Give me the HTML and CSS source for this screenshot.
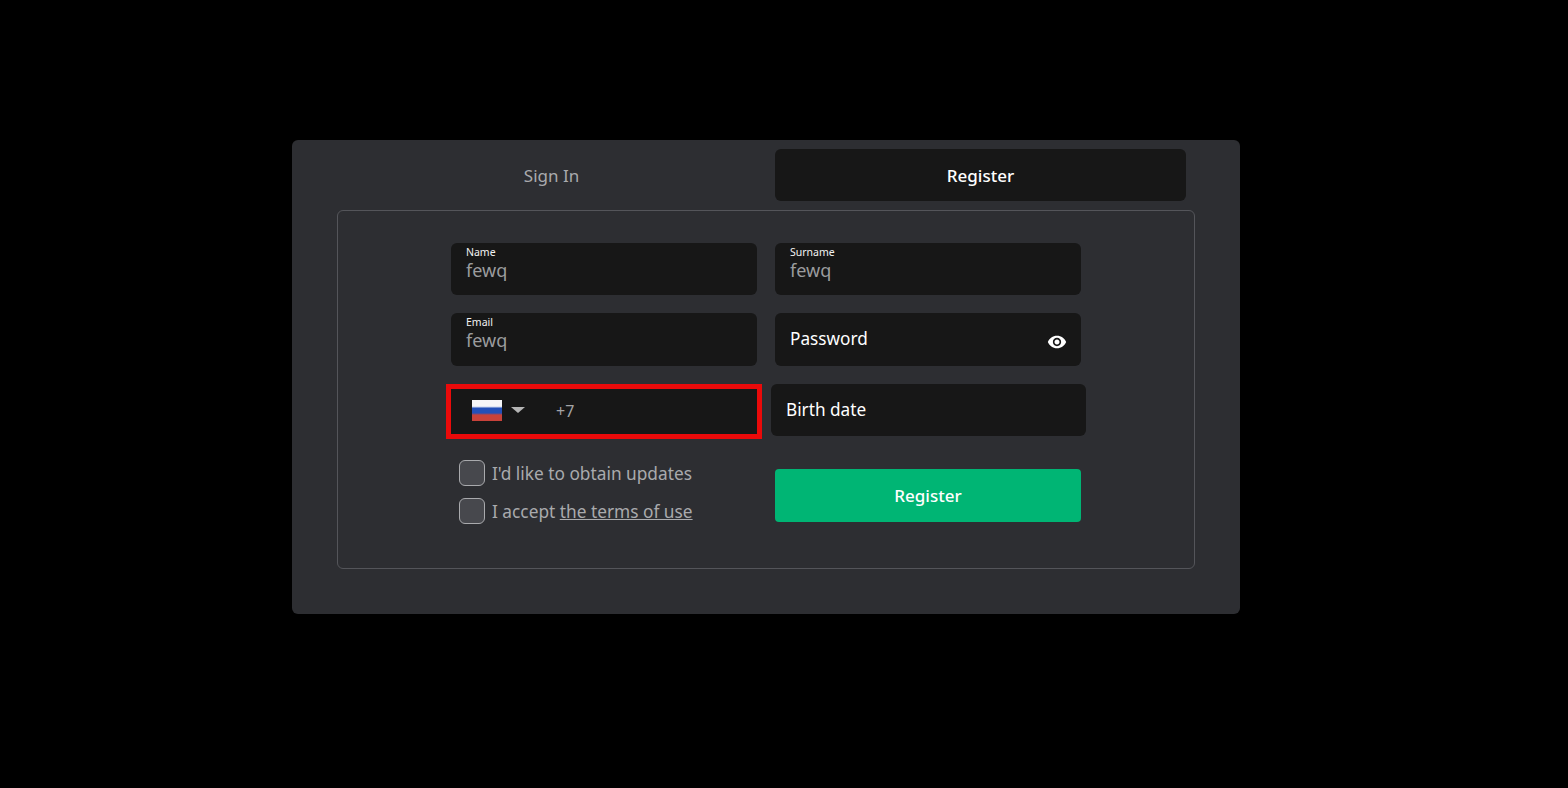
FILE: index.html
```html
<!DOCTYPE html>
<html lang="en">
<head>
    <meta charset="UTF-8">
    <title>Register</title>
    <link rel="stylesheet" href="styles.css">
</head>
<body>
    <div class="panel">
        <div class="tabs">
            <div class="tab">Sign In</div>
            <div class="tab tab-active">Register</div>
        </div>
        <div class="box">
            <form class="reg-form">
                <div class="row">
                    <div class="field">
                        <span class="float-label">Name</span>
                        <span class="value">fewq</span>
                    </div>
                    <div class="field">
                        <span class="float-label">Surname</span>
                        <span class="value">fewq</span>
                    </div>
                </div>
                <div class="row">
                    <div class="field field-tall">
                        <span class="float-label">Email</span>
                        <span class="value">fewq</span>
                    </div>
                    <div class="field field-tall field-plain">
                        <span class="placeholder">Password</span>
                        <svg class="eye" viewBox="0 0 24 24" width="20" height="20">
                            <path fill="#fff" d="M12 4.5C7 4.5 2.73 7.61 1 12c1.73 4.39 6 7.5 11 7.5s9.27-3.11 11-7.5c-1.73-4.39-6-7.5-11-7.5zM12 17c-2.76 0-5-2.24-5-5s2.24-5 5-5 5 2.24 5 5-2.24 5-5 5zm0-8c-1.66 0-3 1.34-3 3s1.34 3 3 3 3-1.34 3-3-1.34-3-3-3z"/>
                        </svg>
                    </div>
                </div>
                <div class="row row-wide">
                    <div class="phone">
                        <span class="flag"></span>
                        <span class="caret"></span>
                        <span class="dial">+7</span>
                    </div>
                    <div class="field field-plain field-birth">
                        <span class="placeholder">Birth date</span>
                    </div>
                </div>
                <div class="row">
                    <div class="checks">
                        <label class="check"><span class="checkbox"></span>I'd like to obtain updates</label>
                        <label class="check"><span class="checkbox"></span><span>I accept <a href="#">the terms of use</a></span></label>
                    </div>
                    <button type="button" class="submit">Register</button>
                </div>
            </form>
        </div>
    </div>
</body>
</html>
```

FILE: styles.css
```css
* {
    box-sizing: border-box;
    margin: 0;
    padding: 0;
}

body {
    background-color: #000;
    font-family: "Noto Sans", "Open Sans", sans-serif;
    height: 788px;
    padding-top: 140px;
    overflow: hidden;
}

.panel {
    width: 948px;
    height: 474px;
    margin-left: 292px;
    padding-top: 9px;
    background-color: #2d2e32;
    border-radius: 6px;
    display: flex;
    flex-direction: column;
    align-items: center;
}

.tabs {
    display: flex;
    gap: 18px;
    width: 840px;
    margin-bottom: 9px;
}

.tab {
    flex: 1;
    height: 52px;
    display: flex;
    align-items: center;
    justify-content: center;
    border-radius: 6px;
    font-size: 17px;
    color: #a9aaad;
}

.tab-active {
    background-color: #171717;
    color: #fff;
    font-weight: 500;
}

.box {
    width: 858px;
    height: 359px;
    border: 1px solid #54555a;
    border-radius: 6px;
    padding-top: 32px;
    display: flex;
    justify-content: center;
}

.reg-form {
    width: 630px;
    display: flex;
    flex-direction: column;
}

.row {
    display: flex;
    gap: 18px;
    margin-bottom: 18px;
}

.field {
    position: relative;
    width: 306px;
    height: 52px;
    padding: 3px 15px 0;
    background-color: #171717;
    border-radius: 6px;
    display: flex;
    flex-direction: column;
}

.field-tall {
    height: 53px;
}

.field-plain {
    flex-direction: row;
    align-items: center;
    padding-top: 0;
    padding-bottom: 2px;
}

.float-label {
    font-size: 10.5px;
    line-height: 13px;
    color: #f2f2f2;
}

.value {
    font-size: 18px;
    line-height: 22px;
    color: #9b9c9e;
}

.placeholder {
    font-size: 17.2px;
    color: #fff;
}

.eye {
    position: absolute;
    right: 14px;
    top: 19px;
}

.row-wide {
    gap: 9px;
    margin: 0 -5px 18px;
    align-items: flex-start;
}

.phone {
    width: 316px;
    height: 55px;
    border: 5px solid #ea0a0a;
    background-color: #171717;
    display: flex;
    align-items: flex-start;
    padding: 11px 0 0 21px;
}

.flag {
    width: 30px;
    height: 21px;
    background: linear-gradient(#f6f6f8 6px, #c9d4ee 7px, #2450b8 8px, #2450b8 13px, #c8423a 15px);
}

.caret {
    width: 0;
    height: 0;
    margin: 7px 0 0 9px;
    border-left: 7px solid transparent;
    border-right: 7px solid transparent;
    border-top: 6px solid #b5b5b5;
}

.dial {
    margin-left: 31px;
    font-size: 16px;
    line-height: 22px;
    color: #a3a4a6;
}

.field-birth {
    width: 315px;
}

.checks {
    width: 306px;
    padding: 3px 0 0 8px;
    display: flex;
    flex-direction: column;
    gap: 12px;
}

.check {
    display: flex;
    align-items: center;
    gap: 7px;
    font-size: 17.3px;
    color: #a9aaad;
    height: 26px;
}

.check a {
    color: #a9aaad;
}

.checkbox {
    width: 26px;
    height: 26px;
    background-color: #47484d;
    border: 1px solid #a9aaad;
    border-radius: 6px;
}

.submit {
    width: 306px;
    height: 53px;
    margin-top: 12px;
    background-color: #00b574;
    border: none;
    border-radius: 4px;
    color: #fff;
    font-family: inherit;
    font-size: 17px;
    font-weight: 500;
}
```
